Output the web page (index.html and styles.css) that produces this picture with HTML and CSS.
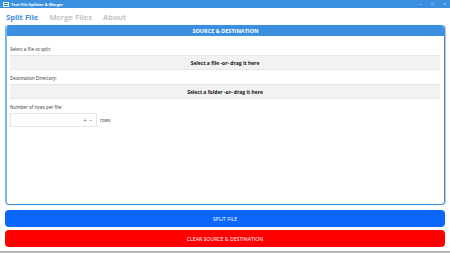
FILE: index.html
```html
<!DOCTYPE html>
<html lang="en">
  <head>
    <meta charset="UTF-8" />
    <title>Text File Splitter &amp; Merger</title>
    <link rel="stylesheet" href="styles.css">
  </head>
  <body>
    <div class="titlebar">
      <div class="app-title">
        <svg class="app-icon" width="6" height="5" viewBox="0 0 6 5">
          <rect x="0" y="0" width="6" height="5" fill="#e8f3ff" />
          <rect x="1" y="1" width="4" height="1" fill="#2e9b5a" />
          <rect x="1" y="3" width="4" height="1" fill="#2e9b5a" />
        </svg>
        <span>Text File Splitter &amp; Merger</span>
      </div>
      <div class="win-controls">
        <span>&#8211;</span>
        <span>&#9633;</span>
        <span>&#215;</span>
      </div>
    </div>

    <div class="tabs">
      <span class="tab active">Split File</span>
      <span class="tab">Merge Files</span>
      <span class="tab">About</span>
    </div>

    <div class="panel">
      <div class="panel-header">SOURCE &amp; DESTINATION</div>
      <div class="panel-body">
        <div class="field">
          <label>Select a file to split:</label>
          <button class="drop-btn">Select a file -or- drag it here</button>
        </div>
        <div class="field">
          <label>Destination Directory:</label>
          <button class="drop-btn">Select a folder -or- drag it here</button>
        </div>
        <div class="field">
          <label>Number of rows per file:</label>
          <div class="rows-row">
            <div class="number-box">
              <span class="spin">+</span>
              <span class="spin">&#8722;</span>
            </div>
            <span class="unit">rows</span>
          </div>
        </div>
      </div>
    </div>

    <div class="actions">
      <button class="action split">SPLIT FILE</button>
      <button class="action clear">CLEAR SOURCE &amp; DESTINATION</button>
    </div>
  </body>
</html>
```

FILE: styles.css
```css
* {
  box-sizing: border-box;
  margin: 0;
  padding: 0;
}
body {
  font-family: "Open Sans", "Noto Sans", sans-serif;
  background: #ffffff;
  width: 450px;
  height: 253px;
  display: flex;
  flex-direction: column;
  border-bottom: 2px solid #b8b8b8;
  overflow: hidden;
}
.titlebar {
  height: 8px;
  background: #3a8fdf;
  display: flex;
  align-items: center;
  justify-content: space-between;
  padding: 0 4px 0 3px;
}
.app-title {
  display: flex;
  align-items: center;
  gap: 2px;
  color: #ffffff;
  font-size: 4px;
  font-weight: 700;
}
.app-icon {
  display: block;
}
.win-controls {
  display: flex;
  gap: 9px;
  color: #cfe3f7;
  font-size: 5px;
  line-height: 8px;
}
.tabs {
  display: flex;
  gap: 11px;
  padding: 2px 6px 0;
  height: 17px;
}
.tab {
  font-size: 7.6px;
  font-weight: 700;
  color: #c4c4c4;
  line-height: 14px;
}
.tab.active {
  color: #3a8fdf;
}
.panel {
  margin: 0 5px;
  height: 180px;
  border: 1px solid #3a8fdf;
  border-left: 2px solid #7ab6ec;
  border-radius: 4px;
  box-shadow: 1px 0 1px rgba(0, 0, 0, 0.25);
  overflow: hidden;
  display: flex;
  flex-direction: column;
}
.panel-header {
  background: #3a8fdf;
  color: #ffffff;
  font-size: 5.5px;
  font-weight: 700;
  height: 10px;
  line-height: 10px;
  text-align: center;
}
.panel-body {
  padding: 9px 4px 0 3px;
  display: flex;
  flex-direction: column;
  gap: 4px;
}
.field {
  display: flex;
  flex-direction: column;
  gap: 2px;
}
.field label {
  font-size: 4.6px;
  color: #333333;
  line-height: 8px;
}
.drop-btn {
  height: 15px;
  width: 100%;
  background: #f2f2f2;
  border: none;
  border-top: 1px solid #e6e6e6;
  border-bottom: 1px solid #e6e6e6;
  font-family: inherit;
  font-size: 5px;
  font-weight: 700;
  color: #111111;
}
.rows-row {
  display: flex;
  align-items: center;
  gap: 3px;
}
.number-box {
  width: 87px;
  height: 14px;
  border: 1px solid #e6e6e6;
  display: flex;
  justify-content: flex-end;
  align-items: center;
  gap: 2px;
  padding-right: 3px;
}
.spin {
  font-size: 7px;
  color: #888888;
  line-height: 1;
}
.unit {
  font-size: 4.6px;
  color: #333333;
}
.actions {
  padding: 5px 5px 0;
  display: flex;
  flex-direction: column;
  gap: 3px;
}
.action {
  height: 17px;
  border: none;
  border-radius: 4px;
  color: #ffffff;
  font-family: inherit;
  font-size: 5.2px;
}
.action.split {
  background: #0b66fb;
}
.action.clear {
  background: #ff0000;
}
```
